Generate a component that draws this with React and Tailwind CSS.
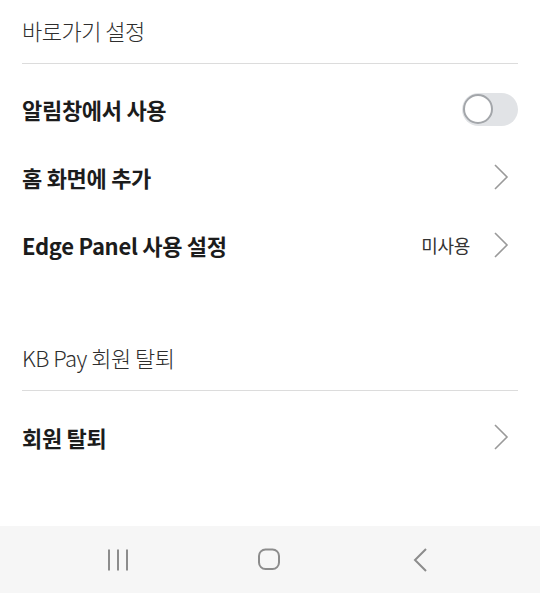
import React from "react";

const font = { fontFamily: '"Noto Sans CJK KR", "Noto Sans", sans-serif' };

function Chevron() {
  return (
    <svg width="16" height="26" viewBox="0 0 16 26" className="shrink-0">
      <path d="M2 1 L14 13 L2 25" fill="none" stroke="#9a9a9a" strokeWidth="1.6" />
    </svg>
  );
}

function SectionHeader({ children }) {
  return (
    <div className="mx-[22px] h-[64px] flex items-center border-b border-[#dcdcdc] pb-[2px]">
      <span className="text-[22px] font-light text-[#2e2e2e] tracking-[-0.5px]">{children}</span>
    </div>
  );
}

function Row({ title, right }) {
  return (
    <div className="mx-[22px] h-[68px] flex items-center justify-between">
      <span className="text-[22px] font-bold text-[#1c1c1c] tracking-[-0.3px]">{title}</span>
      {right}
    </div>
  );
}

function Toggle() {
  return (
    <div className="w-[56px] h-[33px] rounded-full bg-[#e1e3e6] flex items-center pl-[1px]">
      <div className="w-[30px] h-[30px] rounded-full bg-white border-2 border-[#a3a6aa]" />
    </div>
  );
}

export default function App() {
  return (
    <div className="w-[540px] h-[593px] bg-white flex flex-col overflow-hidden" style={font}>
      <div className="flex-1">
        <SectionHeader>바로가기 설정</SectionHeader>
        <div className="pt-[11px]">
          <Row title="알림창에서 사용" right={<Toggle />} />
          <Row
            title="홈 화면에 추가"
            right={
              <div className="pr-[9px] flex items-center">
                <Chevron />
              </div>
            }
          />
          <Row
            title="Edge Panel 사용 설정"
            right={
              <div className="pr-[9px] flex items-center gap-[23px]">
                <span className="text-[18px] text-[#333333] tracking-[-0.3px]">미사용</span>
                <Chevron />
              </div>
            }
          />
        </div>
        <div className="mt-[48px]">
          <SectionHeader>KB Pay 회원 탈퇴</SectionHeader>
        </div>
        <div className="pt-[12px]">
          <Row
            title="회원 탈퇴"
            right={
              <div className="pr-[9px] flex items-center">
                <Chevron />
              </div>
            }
          />
        </div>
      </div>
      <div className="h-[67px] bg-[#f6f6f6] flex items-center pl-[42px]">
        <div className="w-[151px] flex justify-center">
          <svg width="22" height="22" viewBox="0 0 22 22">
            <rect x="1" y="0.5" width="2" height="21" fill="#8c8c8c" />
            <rect x="10" y="0.5" width="2" height="21" fill="#8c8c8c" />
            <rect x="19" y="0.5" width="2" height="21" fill="#8c8c8c" />
          </svg>
        </div>
        <div className="w-[151px] flex justify-center">
          <svg width="24" height="23" viewBox="0 0 24 23">
            <rect x="2" y="1.5" width="20" height="19.5" rx="6.5" fill="none" stroke="#8c8c8c" strokeWidth="2" />
          </svg>
        </div>
        <div className="w-[151px] flex justify-center">
          <svg width="16" height="24" viewBox="0 0 16 24">
            <path d="M14 1 L3 12 L14 23" fill="none" stroke="#8c8c8c" strokeWidth="2" />
          </svg>
        </div>
      </div>
    </div>
  );
}
